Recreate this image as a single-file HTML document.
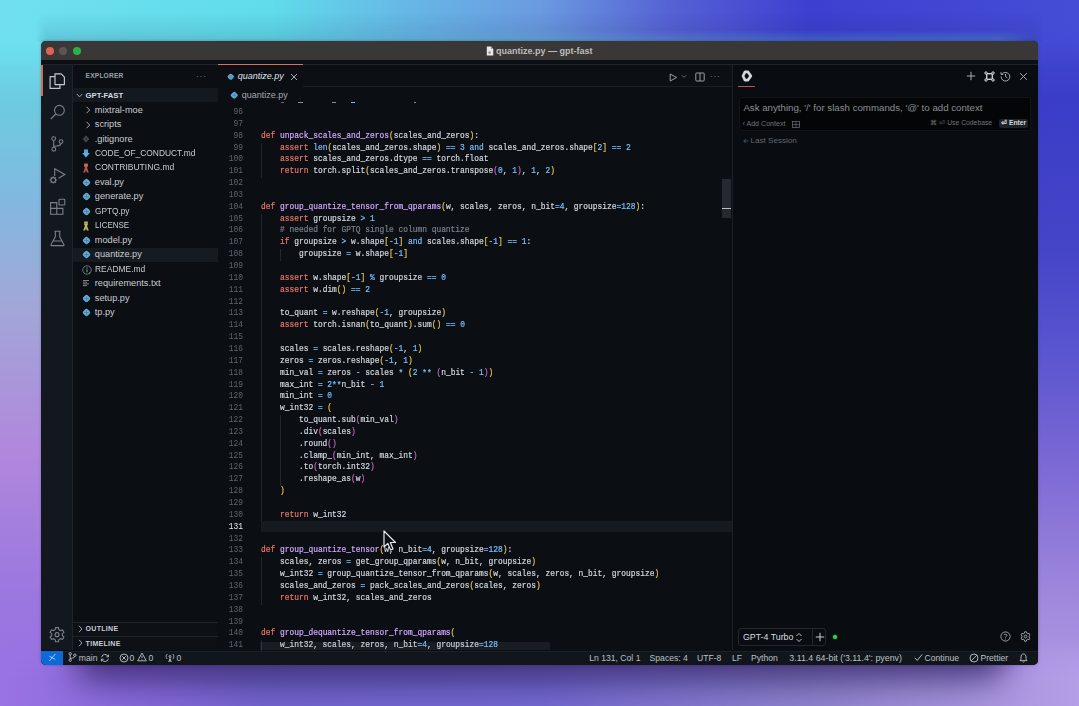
<!DOCTYPE html>
<html><head><meta charset="utf-8">
<style>
*{margin:0;padding:0;box-sizing:border-box}
html,body{width:1079px;height:706px;overflow:hidden}
body{position:relative;font-family:"Liberation Sans",sans-serif;background:#8a90e0}
i{font-style:normal}
.bgL{position:absolute;left:0;top:0;width:1079px;height:706px;
 background:linear-gradient(to bottom,#70e0f0 0px,#6ce0f0 40px,#6ccbe0 100px,#82b8e0 200px,#a0a8d8 300px,#b088dc 450px,#9a76e0 600px,#9a73e3 706px)}
.bgR{position:absolute;left:0;top:0;width:1079px;height:706px;
 background:linear-gradient(to bottom,#454dd6 0px,#3a3dc8 100px,#4545c8 250px,#5a55d0 353px,#7866d4 450px,#a088dc 600px,#b59ee8 706px);
 -webkit-mask-image:linear-gradient(to right,rgba(0,0,0,0) 0px,rgba(0,0,0,0) 1000px,rgba(0,0,0,1) 1040px)}
.bgT{position:absolute;left:0;top:0;width:1079px;height:706px;
 background:linear-gradient(to right,#70e0f0 0px,#60dcea 270px,#66b8e6 405px,#6a9ae0 540px,#5560d4 675px,#3c40d0 810px,#454dd6 1079px);
 -webkit-mask-image:linear-gradient(to bottom,rgba(0,0,0,1) 0px,rgba(0,0,0,1) 30px,rgba(0,0,0,0) 70px)}
.bgB{position:absolute;left:0;top:0;width:1079px;height:706px;
 background:linear-gradient(to right,#9a73e3 0px,#8668d8 135px,#7163cb 270px,#7267cf 540px,#8d81cb 810px,#b59ee8 1079px);
 -webkit-mask-image:linear-gradient(to bottom,rgba(0,0,0,0) 0px,rgba(0,0,0,0) 640px,rgba(0,0,0,1) 680px)}
.win{position:absolute;left:41px;top:41px;width:997px;height:624px;border-radius:5px;overflow:hidden;background:#0b0e12;
 box-shadow:0 0 3px rgba(0,0,0,0.25)}
.shadow{position:absolute;left:75px;top:600px;width:930px;height:80px;background:rgba(30,20,75,0.68);filter:blur(16px);border-radius:20px}
.abs{position:absolute}
.title{left:0;top:0;width:997px;height:19px;background:#3a3737}
.dot{position:absolute;top:5.7px;width:8.6px;height:8.6px;border-radius:50%}
.ttext{position:absolute;left:455px;top:5px;font-size:9px;font-weight:bold;color:#bdbdbd;white-space:pre}
.band{left:0;top:19px;width:997px;height:5px;background:#0c0f13;border-bottom:1px solid #20242a}
.act{left:0;top:24px;width:32px;height:585px;background:#13181e;border-right:1px solid #1f242a}
.side{left:32px;top:24px;width:145px;height:585px;background:#0b0e12}
.edit{left:177px;top:24px;width:514px;height:585px;background:#0b0e13;overflow:hidden}
.panel{left:690.5px;top:24px;width:306.5px;height:585px;background:#090c10;border-left:1px solid #1d2126}
.status{left:0;top:609.7px;width:997px;height:14.3px;background:#11161c;border-top:1px solid #1b2027}
.t{position:absolute;white-space:pre;color:#c8ccd2;line-height:1}
.ln{position:absolute;left:170px;width:32px;text-align:right;font-family:"Liberation Mono",monospace;font-size:8.9px;transform:scaleX(0.89);transform-origin:100% 0;line-height:11.856px;height:11.856px;color:#5f666e;white-space:pre}
.ln.cur{color:#e6edf3}
.cl{position:absolute;left:219.8px;-webkit-text-stroke:0.2px currentColor;font-family:"Liberation Mono",monospace;font-size:8.9px;transform:scaleX(0.89);transform-origin:0 0;line-height:11.856px;height:11.856px;color:#d3d9df;white-space:pre}
.guide{position:absolute;width:1px;background:#22272e}
.row{position:absolute;left:32px;width:145px;height:14.5px}
.row.sel{background:#161b22}
.ic{position:absolute;display:block;line-height:0}
.fn{position:absolute;top:1.5px;font-size:9.2px;line-height:10px;color:#c9cdd3;white-space:pre}
svg{display:block}
</style></head><body>
<div class="bgL"></div><div class="bgR"></div><div class="bgT"></div><div class="bgB"></div><div class="shadow"></div><div style="position:absolute;left:36px;top:12px;width:1007px;height:30px;background:linear-gradient(to bottom,rgba(10,20,60,0) 0px,rgba(10,20,60,0.07) 18px,rgba(10,20,60,0.14) 29px);-webkit-mask-image:linear-gradient(to right,transparent 0,black 10px,black 997px,transparent 1007px)"></div>
<div class="win">
  <div class="abs title">
    <div class="dot" style="left:4.7px;background:#dd6258"></div>
    <div class="dot" style="left:17.7px;background:#5a5656"></div>
    <div class="dot" style="left:31.7px;background:#2bb04a"></div>
    <div class="ttext">quantize.py — gpt-fast</div>
    <svg class="abs" style="left:444.5px;top:4.8px" width="8" height="10" viewBox="0 0 8 10"><path d="M0.8 0.6 H5 L7.3 2.9 V9.4 H0.8 Z" fill="#e8e8e8"/><path d="M5 0.6 V2.9 H7.3" fill="#9a9a9a"/><circle cx="3.6" cy="6.6" r="1.3" fill="#8a9ab0"/></svg>
  </div>
  <div class="abs band"></div>
  <div class="abs act"></div>
  <div class="abs side"></div>
  <div class="abs panel"></div>
  <div class="abs status"></div>
  <!-- code -->
  <div class="abs" style="left:177px;top:46px;width:514px;height:563px;background:#0b0e13"></div>
  <div class="guide" style="left:219.6px;top:101.5px;height:35.5px"></div><div class="guide" style="left:219.6px;top:172.6px;height:308.1px"></div><div class="guide" style="left:219.6px;top:516.2px;height:47.4px"></div><div class="guide" style="left:219.6px;top:599.2px;height:11.8px"></div><div class="guide" style="left:238.6px;top:208.1px;height:11.8px"></div><div class="guide" style="left:238.6px;top:374.0px;height:71.1px"></div>
  <div class="ln" style="top:65.95px">96</div>
<div class="ln" style="top:77.80px">97</div>
<div class="ln" style="top:89.65px">98</div>
<div class="ln" style="top:101.50px">99</div>
<div class="ln" style="top:113.35px">100</div>
<div class="ln" style="top:125.20px">101</div>
<div class="ln" style="top:137.05px">102</div>
<div class="ln" style="top:148.90px">103</div>
<div class="ln" style="top:160.75px">104</div>
<div class="ln" style="top:172.60px">105</div>
<div class="ln" style="top:184.45px">106</div>
<div class="ln" style="top:196.30px">107</div>
<div class="ln" style="top:208.15px">108</div>
<div class="ln" style="top:220.00px">109</div>
<div class="ln" style="top:231.85px">110</div>
<div class="ln" style="top:243.70px">111</div>
<div class="ln" style="top:255.55px">112</div>
<div class="ln" style="top:267.40px">113</div>
<div class="ln" style="top:279.25px">114</div>
<div class="ln" style="top:291.10px">115</div>
<div class="ln" style="top:302.95px">116</div>
<div class="ln" style="top:314.80px">117</div>
<div class="ln" style="top:326.65px">118</div>
<div class="ln" style="top:338.50px">119</div>
<div class="ln" style="top:350.35px">120</div>
<div class="ln" style="top:362.20px">121</div>
<div class="ln" style="top:374.05px">122</div>
<div class="ln" style="top:385.90px">123</div>
<div class="ln" style="top:397.75px">124</div>
<div class="ln" style="top:409.60px">125</div>
<div class="ln" style="top:421.45px">126</div>
<div class="ln" style="top:433.30px">127</div>
<div class="ln" style="top:445.15px">128</div>
<div class="ln" style="top:457.00px">129</div>
<div class="ln" style="top:468.85px">130</div>
<div class="ln cur" style="top:480.70px">131</div>
<div class="ln" style="top:492.55px">132</div>
<div class="ln" style="top:504.40px">133</div>
<div class="ln" style="top:516.25px">134</div>
<div class="ln" style="top:528.10px">135</div>
<div class="ln" style="top:539.95px">136</div>
<div class="ln" style="top:551.80px">137</div>
<div class="ln" style="top:563.65px">138</div>
<div class="ln" style="top:575.50px">139</div>
<div class="ln" style="top:587.35px">140</div>
<div class="ln" style="top:599.20px">141</div>
<div class="cl" style="top:65.95px"></div>
<div class="cl" style="top:77.80px"></div>
<div class="cl" style="top:89.65px"><i style="color:#f0766a">def</i> <i style="color:#d2a8ff">unpack_scales_and_zeros</i><i style="color:#e8c64a">(</i>scales_and_zeros<i style="color:#e8c64a">)</i>:</div>
<div class="cl" style="top:101.50px">    <i style="color:#f0766a">assert</i> <i style="color:#79c0ff">len</i><i style="color:#e8c64a">(</i>scales_and_zeros.shape<i style="color:#e8c64a">)</i> <i style="color:#79c0ff">==</i> <i style="color:#79c0ff">3</i> <i style="color:#79c0ff">and</i> scales_and_zeros.shape<i style="color:#e8c64a">[</i><i style="color:#79c0ff">2</i><i style="color:#e8c64a">]</i> <i style="color:#79c0ff">==</i> <i style="color:#79c0ff">2</i></div>
<div class="cl" style="top:113.35px">    <i style="color:#f0766a">assert</i> scales_and_zeros.dtype <i style="color:#79c0ff">==</i> torch.float</div>
<div class="cl" style="top:125.20px">    <i style="color:#f0766a">return</i> torch.split<i style="color:#e8c64a">(</i>scales_and_zeros.transpose<i style="color:#c766c4">(</i><i style="color:#79c0ff">0</i>, <i style="color:#79c0ff">1</i><i style="color:#c766c4">)</i>, <i style="color:#79c0ff">1</i>, <i style="color:#79c0ff">2</i><i style="color:#e8c64a">)</i></div>
<div class="cl" style="top:137.05px"></div>
<div class="cl" style="top:148.90px"></div>
<div class="cl" style="top:160.75px"><i style="color:#f0766a">def</i> <i style="color:#d2a8ff">group_quantize_tensor_from_qparams</i><i style="color:#e8c64a">(</i>w, scales, zeros, n_bit<i style="color:#79c0ff">=</i><i style="color:#79c0ff">4</i>, groupsize<i style="color:#79c0ff">=</i><i style="color:#79c0ff">128</i><i style="color:#e8c64a">)</i>:</div>
<div class="cl" style="top:172.60px">    <i style="color:#f0766a">assert</i> groupsize <i style="color:#79c0ff">&gt;</i> <i style="color:#79c0ff">1</i></div>
<div class="cl" style="top:184.45px">    <i style="color:#7a828b"># needed for GPTQ single column quantize</i></div>
<div class="cl" style="top:196.30px">    <i style="color:#f0766a">if</i> groupsize <i style="color:#79c0ff">&gt;</i> w.shape<i style="color:#e8c64a">[</i><i style="color:#79c0ff">-</i><i style="color:#79c0ff">1</i><i style="color:#e8c64a">]</i> <i style="color:#79c0ff">and</i> scales.shape<i style="color:#e8c64a">[</i><i style="color:#79c0ff">-</i><i style="color:#79c0ff">1</i><i style="color:#e8c64a">]</i> <i style="color:#79c0ff">==</i> <i style="color:#79c0ff">1</i>:</div>
<div class="cl" style="top:208.15px">        groupsize <i style="color:#79c0ff">=</i> w.shape<i style="color:#e8c64a">[</i><i style="color:#79c0ff">-</i><i style="color:#79c0ff">1</i><i style="color:#e8c64a">]</i></div>
<div class="cl" style="top:220.00px"></div>
<div class="cl" style="top:231.85px">    <i style="color:#f0766a">assert</i> w.shape<i style="color:#e8c64a">[</i><i style="color:#79c0ff">-</i><i style="color:#79c0ff">1</i><i style="color:#e8c64a">]</i> <i style="color:#79c0ff">%</i> groupsize <i style="color:#79c0ff">==</i> <i style="color:#79c0ff">0</i></div>
<div class="cl" style="top:243.70px">    <i style="color:#f0766a">assert</i> w.dim<i style="color:#e8c64a">(</i><i style="color:#e8c64a">)</i> <i style="color:#79c0ff">==</i> <i style="color:#79c0ff">2</i></div>
<div class="cl" style="top:255.55px"></div>
<div class="cl" style="top:267.40px">    to_quant <i style="color:#79c0ff">=</i> w.reshape<i style="color:#e8c64a">(</i><i style="color:#79c0ff">-</i><i style="color:#79c0ff">1</i>, groupsize<i style="color:#e8c64a">)</i></div>
<div class="cl" style="top:279.25px">    <i style="color:#f0766a">assert</i> torch.isnan<i style="color:#e8c64a">(</i>to_quant<i style="color:#e8c64a">)</i>.sum<i style="color:#e8c64a">(</i><i style="color:#e8c64a">)</i> <i style="color:#79c0ff">==</i> <i style="color:#79c0ff">0</i></div>
<div class="cl" style="top:291.10px"></div>
<div class="cl" style="top:302.95px">    scales <i style="color:#79c0ff">=</i> scales.reshape<i style="color:#e8c64a">(</i><i style="color:#79c0ff">-</i><i style="color:#79c0ff">1</i>, <i style="color:#79c0ff">1</i><i style="color:#e8c64a">)</i></div>
<div class="cl" style="top:314.80px">    zeros <i style="color:#79c0ff">=</i> zeros.reshape<i style="color:#e8c64a">(</i><i style="color:#79c0ff">-</i><i style="color:#79c0ff">1</i>, <i style="color:#79c0ff">1</i><i style="color:#e8c64a">)</i></div>
<div class="cl" style="top:326.65px">    min_val <i style="color:#79c0ff">=</i> zeros <i style="color:#79c0ff">-</i> scales <i style="color:#79c0ff;position:relative;top:1.6px">*</i> <i style="color:#e8c64a">(</i><i style="color:#79c0ff">2</i> <i style="color:#79c0ff;position:relative;top:1.6px">**</i> <i style="color:#c766c4">(</i>n_bit <i style="color:#79c0ff">-</i> <i style="color:#79c0ff">1</i><i style="color:#c766c4">)</i><i style="color:#e8c64a">)</i></div>
<div class="cl" style="top:338.50px">    max_int <i style="color:#79c0ff">=</i> <i style="color:#79c0ff">2</i><i style="color:#79c0ff;position:relative;top:1.6px">**</i>n_bit <i style="color:#79c0ff">-</i> <i style="color:#79c0ff">1</i></div>
<div class="cl" style="top:350.35px">    min_int <i style="color:#79c0ff">=</i> <i style="color:#79c0ff">0</i></div>
<div class="cl" style="top:362.20px">    w_int32 <i style="color:#79c0ff">=</i> <i style="color:#e8c64a">(</i></div>
<div class="cl" style="top:374.05px">        to_quant.sub<i style="color:#c766c4">(</i>min_val<i style="color:#c766c4">)</i></div>
<div class="cl" style="top:385.90px">        .div<i style="color:#c766c4">(</i>scales<i style="color:#c766c4">)</i></div>
<div class="cl" style="top:397.75px">        .round<i style="color:#c766c4">(</i><i style="color:#c766c4">)</i></div>
<div class="cl" style="top:409.60px">        .clamp_<i style="color:#c766c4">(</i>min_int, max_int<i style="color:#c766c4">)</i></div>
<div class="cl" style="top:421.45px">        .to<i style="color:#c766c4">(</i>torch.int32<i style="color:#c766c4">)</i></div>
<div class="cl" style="top:433.30px">        .reshape_as<i style="color:#c766c4">(</i>w<i style="color:#c766c4">)</i></div>
<div class="cl" style="top:445.15px">    <i style="color:#e8c64a">)</i></div>
<div class="cl" style="top:457.00px"></div>
<div class="cl" style="top:468.85px">    <i style="color:#f0766a">return</i> w_int32</div>
<div class="cl" style="top:480.70px"></div>
<div class="cl" style="top:492.55px"></div>
<div class="cl" style="top:504.40px"><i style="color:#f0766a">def</i> <i style="color:#d2a8ff">group_quantize_tensor</i><i style="color:#e8c64a">(</i>w, n_bit<i style="color:#79c0ff">=</i><i style="color:#79c0ff">4</i>, groupsize<i style="color:#79c0ff">=</i><i style="color:#79c0ff">128</i><i style="color:#e8c64a">)</i>:</div>
<div class="cl" style="top:516.25px">    scales, zeros <i style="color:#79c0ff">=</i> get_group_qparams<i style="color:#e8c64a">(</i>w, n_bit, groupsize<i style="color:#e8c64a">)</i></div>
<div class="cl" style="top:528.10px">    w_int32 <i style="color:#79c0ff">=</i> group_quantize_tensor_from_qparams<i style="color:#e8c64a">(</i>w, scales, zeros, n_bit, groupsize<i style="color:#e8c64a">)</i></div>
<div class="cl" style="top:539.95px">    scales_and_zeros <i style="color:#79c0ff">=</i> pack_scales_and_zeros<i style="color:#e8c64a">(</i>scales, zeros<i style="color:#e8c64a">)</i></div>
<div class="cl" style="top:551.80px">    <i style="color:#f0766a">return</i> w_int32, scales_and_zeros</div>
<div class="cl" style="top:563.65px"></div>
<div class="cl" style="top:575.50px"></div>
<div class="cl" style="top:587.35px"><i style="color:#f0766a">def</i> <i style="color:#d2a8ff">group_dequantize_tensor_from_qparams</i><i style="color:#e8c64a">(</i></div>
<div class="cl" style="top:599.20px">    w_int32, scales, zeros, n_bit<i style="color:#79c0ff">=</i><i style="color:#79c0ff">4</i>, groupsize<i style="color:#79c0ff">=</i><i style="color:#79c0ff">128</i></div>
  <!-- sidebar -->
  <div class="row" style="top:62.05px"><span class="ic" style="left:11.0px;top:3.2px"><svg width="8" height="8" viewBox="0 0 8 8"><path d="M2.5 0.8 L5.7 4 L2.5 7.2" fill="none" stroke="#b8bcc2" stroke-width="0.9"/></svg></span><span class="fn" style="left:21.8px">mixtral-moe</span></div>
<div class="row" style="top:76.53px"><span class="ic" style="left:11.0px;top:3.2px"><svg width="8" height="8" viewBox="0 0 8 8"><path d="M2.5 0.8 L5.7 4 L2.5 7.2" fill="none" stroke="#b8bcc2" stroke-width="0.9"/></svg></span><span class="fn" style="left:21.8px">scripts</span></div>
<div class="row" style="top:91.01px"><span class="ic" style="left:9.0px;top:2.5px"><svg width="8" height="8" viewBox="0 0 8 8"><path d="M4 0.6 L7.4 4 L4 7.4 L0.6 4Z" fill="#44484e"/><circle cx="4" cy="4" r="1" fill="#2a2d31"/></svg></span><span class="fn" style="left:21.8px">.gitignore</span></div>
<div class="row" style="top:105.49px"><span class="ic" style="left:9.0px;top:2.5px"><svg width="8" height="9" viewBox="0 0 8 9"><path d="M2 0.5 H6 V4 H7.8 L4 8.6 L0.2 4 H2Z" fill="#5fb0e0"/><path d="M3 0.5 V3.5 M5 0.5 V3.5" stroke="#3d7fb0" stroke-width="0.6"/></svg></span><span class="fn" style="left:21.8px;transform:scaleX(0.914);transform-origin:0 0">CODE_OF_CONDUCT.md</span></div>
<div class="row" style="top:119.97px"><span class="ic" style="left:9.0px;top:2.5px"><svg width="8" height="10" viewBox="0 0 8 10"><path d="M2 0.5 H6 V3.5 L5 4.5 L6.8 9.5 H4.8 L4 6.8 L3.2 9.5 H1.2 L3 4.5 L2 3.5Z" fill="#b9554a"/><circle cx="4" cy="2.3" r="0.9" fill="#e08070"/></svg></span><span class="fn" style="left:21.8px;transform:scaleX(0.93);transform-origin:0 0">CONTRIBUTING.md</span></div>
<div class="row" style="top:134.45px"><span class="ic" style="left:9.0px;top:2.5px"><svg width="9" height="9" viewBox="0 0 9 9"><rect x="1.35" y="1.35" width="6.3" height="6.3" rx="2" transform="rotate(45 4.5 4.5)" fill="#62a9da"/><path d="M2.5 4.5 H6.5 M4.5 2.5 V6.5" stroke="#3d78b0" stroke-width="0.7"/><circle cx="6.2" cy="5.8" r="0.8" fill="#40c060"/></svg></span><span class="fn" style="left:21.8px">eval.py</span></div>
<div class="row" style="top:148.93px"><span class="ic" style="left:9.0px;top:2.5px"><svg width="9" height="9" viewBox="0 0 9 9"><rect x="1.35" y="1.35" width="6.3" height="6.3" rx="2" transform="rotate(45 4.5 4.5)" fill="#62a9da"/><path d="M2.5 4.5 H6.5 M4.5 2.5 V6.5" stroke="#3d78b0" stroke-width="0.7"/><circle cx="6.2" cy="5.8" r="0.8" fill="#40c060"/></svg></span><span class="fn" style="left:21.8px">generate.py</span></div>
<div class="row" style="top:163.41px"><span class="ic" style="left:9.0px;top:2.5px"><svg width="9" height="9" viewBox="0 0 9 9"><rect x="1.35" y="1.35" width="6.3" height="6.3" rx="2" transform="rotate(45 4.5 4.5)" fill="#62a9da"/><path d="M2.5 4.5 H6.5 M4.5 2.5 V6.5" stroke="#3d78b0" stroke-width="0.7"/><circle cx="6.2" cy="5.8" r="0.8" fill="#40c060"/></svg></span><span class="fn" style="left:21.8px;transform:scaleX(0.9);transform-origin:0 0">GPTQ.py</span></div>
<div class="row" style="top:177.89px"><span class="ic" style="left:9.0px;top:2.5px"><svg width="8" height="10" viewBox="0 0 8 10"><path d="M2.2 0.5 H5.8 V4 L5 4.8 L6.8 9.5 H4.8 L4 7 L3.2 9.5 H1.2 L3 4.8 L2.2 4Z" fill="#c7b860"/><circle cx="4" cy="2.3" r="0.9" fill="#9a8a40"/></svg></span><span class="fn" style="left:21.8px;transform:scaleX(0.87);transform-origin:0 0">LICENSE</span></div>
<div class="row" style="top:192.37px"><span class="ic" style="left:9.0px;top:2.5px"><svg width="9" height="9" viewBox="0 0 9 9"><rect x="1.35" y="1.35" width="6.3" height="6.3" rx="2" transform="rotate(45 4.5 4.5)" fill="#62a9da"/><path d="M2.5 4.5 H6.5 M4.5 2.5 V6.5" stroke="#3d78b0" stroke-width="0.7"/><circle cx="6.2" cy="5.8" r="0.8" fill="#40c060"/></svg></span><span class="fn" style="left:21.8px">model.py</span></div>
<div class="row sel" style="top:206.85px"><span class="ic" style="left:9.0px;top:2.5px"><svg width="9" height="9" viewBox="0 0 9 9"><rect x="1.35" y="1.35" width="6.3" height="6.3" rx="2" transform="rotate(45 4.5 4.5)" fill="#62a9da"/><path d="M2.5 4.5 H6.5 M4.5 2.5 V6.5" stroke="#3d78b0" stroke-width="0.7"/><circle cx="6.2" cy="5.8" r="0.8" fill="#40c060"/></svg></span><span class="fn" style="left:21.8px">quantize.py</span></div>
<div class="row" style="top:221.33px"><span class="ic" style="left:9.0px;top:2.5px"><svg width="10" height="10" viewBox="0 0 10 10"><circle cx="5" cy="5" r="4.2" fill="none" stroke="#6f7f8f" stroke-width="0.9"/><path d="M5 4.3 V7.3" stroke="#8a9aa8" stroke-width="1"/><circle cx="5" cy="2.9" r="0.6" fill="#8a9aa8"/><circle cx="7.5" cy="8.3" r="0.8" fill="#3cc060"/></svg></span><span class="fn" style="left:21.8px;transform:scaleX(0.92);transform-origin:0 0">README.md</span></div>
<div class="row" style="top:235.81px"><span class="ic" style="left:9.0px;top:2.5px"><svg width="8" height="8" viewBox="0 0 8 8"><path d="M1 1.5 H7 M1 3.2 H5 M1 4.9 H7 M1 6.6 H5" stroke="#8d9196" stroke-width="0.9"/></svg></span><span class="fn" style="left:21.8px">requirements.txt</span></div>
<div class="row" style="top:250.29px"><span class="ic" style="left:9.0px;top:2.5px"><svg width="9" height="9" viewBox="0 0 9 9"><rect x="1.35" y="1.35" width="6.3" height="6.3" rx="2" transform="rotate(45 4.5 4.5)" fill="#62a9da"/><path d="M2.5 4.5 H6.5 M4.5 2.5 V6.5" stroke="#3d78b0" stroke-width="0.7"/><circle cx="6.2" cy="5.8" r="0.8" fill="#40c060"/></svg></span><span class="fn" style="left:21.8px">setup.py</span></div>
<div class="row" style="top:264.77px"><span class="ic" style="left:9.0px;top:2.5px"><svg width="9" height="9" viewBox="0 0 9 9"><rect x="1.35" y="1.35" width="6.3" height="6.3" rx="2" transform="rotate(45 4.5 4.5)" fill="#62a9da"/><path d="M2.5 4.5 H6.5 M4.5 2.5 V6.5" stroke="#3d78b0" stroke-width="0.7"/><circle cx="6.2" cy="5.8" r="0.8" fill="#40c060"/></svg></span><span class="fn" style="left:21.8px">tp.py</span></div>

  <!-- activity bar -->
  <div class="abs" style="left:0;top:24px;width:1.5px;height:31px;background:#d2704c"></div>
  <svg class="abs" style="left:7.5px;top:31.5px" width="17" height="17" viewBox="0 0 17 17" fill="none" stroke="#c3c7cc" stroke-width="1.2" stroke-linejoin="round">
    <path d="M6 0.9 H12.2 L15.4 4.1 V11.6 H6 Z"/>
    <path d="M6 3.6 H1.1 V15.4 H10.9 V11.6"/>
  </svg>
  <svg class="abs" style="left:7.5px;top:62.5px" width="17" height="17" viewBox="0 0 17 17" fill="none" stroke="#7c8188" stroke-width="1.1">
    <circle cx="10.4" cy="6.3" r="4.9"/><path d="M6.8 10 L1.8 15"/>
  </svg>
  <svg class="abs" style="left:7.5px;top:93.5px" width="17" height="17" viewBox="0 0 17 17" fill="none" stroke="#7c8188" stroke-width="1.1">
    <circle cx="4.7" cy="3.6" r="1.9"/><circle cx="12" cy="6.6" r="1.9"/><circle cx="4.8" cy="14.2" r="1.9"/>
    <path d="M4.7 5.5 V12.3 M12 8.5 C12 10.8 9 11 4.8 11.3"/>
  </svg>
  <svg class="abs" style="left:7.5px;top:125.5px" width="17" height="17" viewBox="0 0 17 17" fill="none" stroke="#7c8188" stroke-width="1.1">
    <path d="M5.7 9 V1.8 L15.8 7.6 L9.6 11.2"/>
    <circle cx="4.3" cy="13" r="2.4"/><path d="M4.3 9.3 V10.3 M4.3 15.6 V16.6 M0.6 13 H1.6 M7 13 H8 M1.7 10.4 L2.4 11.1 M6.2 14.9 L6.9 15.6 M1.7 15.6 L2.4 14.9 M6.2 11.1 L6.9 10.4"/>
  </svg>
  <svg class="abs" style="left:7.5px;top:156.5px" width="17" height="17" viewBox="0 0 17 17" fill="none" stroke="#7c8188" stroke-width="1.1">
    <path d="M1.6 4.6 H7.8 V16.3 H1.6 Z M1.6 10.4 H13.9 V16.3 H7.8"/>
    <rect x="10" y="1.2" width="5.8" height="5.8" rx="0.8"/>
  </svg>
  <svg class="abs" style="left:7.5px;top:189px" width="17" height="17" viewBox="0 0 17 17" fill="none" stroke="#7c8188" stroke-width="1.1">
    <path d="M5.5 1.2 H11.5 M6.3 1.2 V6.8 L2 14.6 C1.8 15.2 2.1 15.6 2.7 15.6 H14.3 C14.9 15.6 15.2 15.2 15 14.6 L10.7 6.8 V1.2 M4 11 H13"/>
  </svg>
  <svg class="abs" style="left:7px;top:584.5px" width="18" height="18" viewBox="0 0 18 18" fill="none" stroke="#7c8188" stroke-width="1.1">
    <path d="M7.6 1.6 H10.4 L10.9 3.7 L12.5 4.6 L14.5 3.9 L15.9 6.3 L14.3 7.7 V9.5 L15.9 11 L14.5 13.4 L12.5 12.7 L10.9 13.6 L10.4 15.7 H7.6 L7.1 13.6 L5.5 12.7 L3.5 13.4 L2.1 11 L3.7 9.5 V7.7 L2.1 6.3 L3.5 3.9 L5.5 4.6 L7.1 3.7 Z"/>
    <circle cx="9" cy="8.65" r="2"/>
  </svg>
  <!-- sidebar header -->
  <div class="t" style="left:44.6px;top:32.3px;font-size:6.6px;font-weight:bold;letter-spacing:0.2px;color:#9ca2a9">EXPLORER</div>
  <div class="t" style="left:155px;top:31px;font-size:9px;color:#6d737a;letter-spacing:0.5px">···</div>
  <div class="abs" style="left:32px;top:46.5px;width:145px;height:14.2px;background:#141920"></div>
  <svg class="abs" style="left:35px;top:51px" width="7" height="7" viewBox="0 0 7 7"><path d="M0.8 2 L3.5 4.9 L6.2 2" fill="none" stroke="#aeb3b9" stroke-width="0.9"/></svg>
  <div class="t" style="left:44.6px;top:50.6px;font-size:7.7px;font-weight:bold;color:#d6dbe0">GPT-FAST</div>
  <!-- outline / timeline -->
  <div class="abs" style="left:32px;top:580.5px;width:145px;height:14px;border-top:1px solid #1f242a;background:#0d1015"></div>
  <div class="abs" style="left:32px;top:594.5px;width:145px;height:14.5px;border-top:1px solid #1f242a;background:#0d1015"></div>
  <svg class="abs" style="left:36px;top:583.5px" width="7" height="8" viewBox="0 0 7 8"><path d="M2 0.8 L4.9 4 L2 7.2" fill="none" stroke="#aeb3b9" stroke-width="0.9"/></svg>
  <svg class="abs" style="left:36px;top:597.8px" width="7" height="8" viewBox="0 0 7 8"><path d="M2 0.8 L4.9 4 L2 7.2" fill="none" stroke="#aeb3b9" stroke-width="0.9"/></svg>
  <div class="t" style="left:44.6px;top:584.3px;font-size:7px;font-weight:bold;letter-spacing:0.3px;color:#c9ced4">OUTLINE</div>
  <div class="t" style="left:44.6px;top:598.6px;font-size:7px;font-weight:bold;letter-spacing:0.3px;color:#c9ced4">TIMELINE</div>
  <!-- tab bar -->
  <div class="abs" style="left:177px;top:24px;width:514px;height:22px;background:#0c0f13;border-bottom:1px solid #1b1f25"></div>
  <div class="abs" style="left:177px;top:23px;width:85px;height:23px;background:#0b0e13;border-top:1.3px solid #d9705c"></div>
  <svg class="abs" style="left:185.5px;top:31.5px" width="7.5" height="7.5" viewBox="0 0 9 9"><rect x="1.35" y="1.35" width="6.3" height="6.3" rx="2" transform="rotate(45 4.5 4.5)" fill="#62a9da"/><path d="M2.5 4.5 H6.5 M4.5 2.5 V6.5" stroke="#3d78b0" stroke-width="0.7"/><circle cx="6.2" cy="5.8" r="0.8" fill="#40c060"/></svg>
  <div class="t" style="left:196.7px;top:31.3px;font-size:9px;font-style:italic;color:#dfe3e8">quantize.py</div>
  <svg class="abs" style="left:248.5px;top:31.8px" width="8" height="8" viewBox="0 0 8 8"><path d="M1 1 L7 7 M7 1 L1 7" stroke="#b9bec4" stroke-width="0.9"/></svg>
  <!-- editor actions -->
  <svg class="abs" style="left:627.5px;top:31.5px" width="9" height="9" viewBox="0 0 9 9"><path d="M1.2 1 L7.6 4.5 L1.2 8 Z" fill="none" stroke="#a9aeb4" stroke-width="0.9" stroke-linejoin="round"/></svg>
  <svg class="abs" style="left:640px;top:33px" width="6" height="5" viewBox="0 0 6 5"><path d="M0.8 1.2 L3 3.4 L5.2 1.2" fill="none" stroke="#7d8288" stroke-width="0.8"/></svg>
  <svg class="abs" style="left:653.5px;top:30.5px" width="10" height="10" viewBox="0 0 10 10"><rect x="0.8" y="1" width="8.4" height="8" rx="0.8" fill="none" stroke="#a9aeb4" stroke-width="0.9"/><path d="M5 1 V9" stroke="#a9aeb4" stroke-width="0.9"/></svg>
  <div class="t" style="left:669px;top:31px;font-size:9px;color:#6d737a;letter-spacing:0.5px">···</div>
  <!-- breadcrumb -->
  <svg class="abs" style="left:188.5px;top:49.8px" width="8.5" height="8.5" viewBox="0 0 9 9"><rect x="1.35" y="1.35" width="6.3" height="6.3" rx="2" transform="rotate(45 4.5 4.5)" fill="#62a9da"/><path d="M2.5 4.5 H6.5 M4.5 2.5 V6.5" stroke="#3d78b0" stroke-width="0.7"/><circle cx="6.2" cy="5.8" r="0.8" fill="#40c060"/></svg>
  <div class="t" style="left:200.8px;top:50px;font-size:9px;color:#a3a9b0">quantize.py</div>
  <div class="abs" style="left:240px;top:60.5px;width:3px;height:1px;background:#6a7078"></div>
  <div class="abs" style="left:257px;top:60.5px;width:5px;height:1px;background:#8a9098"></div>
  <div class="abs" style="left:291px;top:60.5px;width:4px;height:1px;background:#8a9098"></div>
  <div class="abs" style="left:310px;top:60.5px;width:4px;height:1px;background:#79c0ff"></div>
  <div class="abs" style="left:372.5px;top:60.5px;width:2px;height:1px;background:#8a9098"></div>
  <!-- scrollbars -->
  <div class="abs" style="left:681px;top:138.3px;width:9.2px;height:38.5px;background:#252a31"></div>
  <div class="abs" style="left:681px;top:167.1px;width:9.2px;height:1.1px;background:#b9bec3"></div>
  <div class="abs" style="left:219px;top:601px;width:289.5px;height:8px;background:rgba(120,130,145,0.13)"></div>
  <!-- current line -->
  <div class="abs" style="left:219.5px;top:480.4px;width:471px;height:10.4px;background:#161b22"></div>
  <!-- mouse cursor -->
  <svg class="abs" style="left:342px;top:489px" width="14" height="22" viewBox="0 0 14 22">
    <path d="M1 1 V17 L4.8 13.4 L7.6 20 L10 19 L7.3 12.5 L12.5 12.5 Z" fill="#0b0e13" stroke="#e8ecef" stroke-width="1.2" stroke-linejoin="round"/>
  </svg>
  <!-- right panel -->
  <svg class="abs" style="left:699.5px;top:28.9px" width="12" height="12" viewBox="0 0 12 12"><path d="M4 1.9 H7 L9.8 6 L7 10.1 H4 L2 6 Z" fill="none" stroke="#d3d7db" stroke-width="2.7" stroke-linejoin="round"/></svg>
  <div class="abs" style="left:697.2px;top:45.3px;width:16.7px;height:1px;background:#b45a45"></div>
  
  <svg class="abs" style="left:925px;top:30px" width="10" height="10" viewBox="0 0 10 10"><path d="M5 0.8 V9.2 M0.8 5 H9.2" stroke="#a9aeb4" stroke-width="1"/></svg>
  <svg class="abs" style="left:942.5px;top:29.5px" width="11" height="11" viewBox="0 0 11 11"><path d="M1 1 H3 V2.5 H8 V1 H10 V3 H8.5 V8 H10 V10 H8 V8.5 H3 V10 H1 V8 H2.5 V3 H1 Z" fill="none" stroke="#c9ced3" stroke-width="1"/><rect x="3" y="3" width="5" height="5" fill="none" stroke="#c9ced3" stroke-width="0.8"/></svg>
  <svg class="abs" style="left:959px;top:29.5px" width="11" height="11" viewBox="0 0 11 11"><path d="M2.2 3 A4.3 4.3 0 1 1 1.2 5.5" fill="none" stroke="#a9aeb4" stroke-width="1"/><path d="M1 1.2 V3.4 H3.2" fill="none" stroke="#a9aeb4" stroke-width="1"/><path d="M5.5 3 V5.5 L7.3 6.8" fill="none" stroke="#a9aeb4" stroke-width="1"/></svg>
  <svg class="abs" style="left:977.5px;top:30.5px" width="9" height="9" viewBox="0 0 9 9"><path d="M1.2 1.2 L7.8 7.8 M7.8 1.2 L1.2 7.8" stroke="#a9aeb4" stroke-width="1"/></svg>
  <!-- input box -->
  <div class="abs" style="left:698.4px;top:55.7px;width:291.5px;height:34px;background:#040507;border-radius:3px;border:1px solid #111418"></div>
  <div class="t" style="left:702.4px;top:61.5px;font-size:9.7px;color:#8a8f95">Ask anything, '/' for slash commands, '@' to add context</div>
  <div class="t" style="left:701.5px;top:79.6px;font-size:7.1px;color:#6f747a">‹ Add Context</div>
  <svg class="abs" style="left:751px;top:79.5px" width="8" height="7" viewBox="0 0 8 7"><rect x="0.5" y="0.5" width="7" height="6" fill="none" stroke="#6f747a" stroke-width="0.7"/><path d="M0.5 3.5 H7.5 M4 0.5 V6.5" stroke="#6f747a" stroke-width="0.6"/></svg>
  <div class="t" style="left:889.4px;top:79.2px;font-size:6.8px;color:#6f747a">⌘ ⏎ Use Codebase</div>
  <div class="abs" style="left:957.7px;top:78px;width:29px;height:8.5px;background:#1e2227;border-radius:2px"></div>
  <div class="t" style="left:960px;top:79.4px;font-size:6.8px;font-weight:bold;color:#d4d8dc">⏎ Enter</div>
  <svg class="abs" style="left:701.5px;top:96.8px" width="6" height="6" viewBox="0 0 6 6"><path d="M5.5 3 H0.8 M2.8 1 L0.8 3 L2.8 5" fill="none" stroke="#62676d" stroke-width="0.7"/></svg><div class="t" style="left:709.5px;top:95.8px;font-size:8.1px;color:#62676d">Last Session</div>
  <!-- model selector -->
  <div class="abs" style="left:696.8px;top:587.3px;width:88.6px;height:18px;border:1px solid #23272d;border-radius:3px"></div>
  <div class="abs" style="left:771px;top:587.3px;width:1px;height:18px;background:#23272d"></div>
  <div class="t" style="left:702px;top:591.6px;font-size:8.8px;color:#d9dde1">GPT-4 Turbo</div>
  <svg class="abs" style="left:753.7px;top:590.5px" width="8" height="11" viewBox="0 0 8 11"><path d="M1.5 4 L4 1.5 L6.5 4 M1.5 7 L4 9.5 L6.5 7" fill="none" stroke="#c9ced3" stroke-width="0.9"/></svg>
  <svg class="abs" style="left:773.5px;top:591px" width="10" height="10" viewBox="0 0 10 10"><path d="M5 0.8 V9.2 M0.8 5 H9.2" stroke="#c9ced3" stroke-width="1"/></svg>
  <div class="abs" style="left:791.8px;top:593.5px;width:4.5px;height:4.5px;border-radius:50%;background:#33d04a;box-shadow:0 0 2px #33d04a"></div>
  <svg class="abs" style="left:958.5px;top:589.5px" width="11" height="11" viewBox="0 0 11 11"><circle cx="5.5" cy="5.5" r="4.6" fill="none" stroke="#a9aeb4" stroke-width="0.9"/><path d="M4 4.3 C4 2.8 7 2.8 7 4.3 C7 5.3 5.5 5.3 5.5 6.6" fill="none" stroke="#a9aeb4" stroke-width="0.9"/><circle cx="5.5" cy="8.1" r="0.5" fill="#a9aeb4"/></svg>
  <svg class="abs" style="left:978.5px;top:589.5px" width="11" height="11" viewBox="0 0 11 11"><path d="M4.6 0.8 H6.4 L6.7 2.2 L7.8 2.8 L9.1 2.3 L10 3.9 L9 4.8 V6.2 L10 7.1 L9.1 8.7 L7.8 8.2 L6.7 8.8 L6.4 10.2 H4.6 L4.3 8.8 L3.2 8.2 L1.9 8.7 L1 7.1 L2 6.2 V4.8 L1 3.9 L1.9 2.3 L3.2 2.8 L4.3 2.2 Z" fill="none" stroke="#a9aeb4" stroke-width="0.9"/><circle cx="5.5" cy="5.5" r="1.4" fill="none" stroke="#a9aeb4" stroke-width="0.9"/></svg>
  <!-- status bar -->
  <div class="abs" style="left:0;top:609.7px;width:22px;height:14.3px;background:#0b6ad8"></div>
  <svg class="abs" style="left:6.5px;top:611.5px" width="9" height="9" viewBox="0 0 9 9"><path d="M1.3 8 L7.3 1 M1.3 3.2 L7.3 6.4" fill="none" stroke="#bfe6ff" stroke-width="0.8"/></svg>
  <svg class="abs" style="left:26.5px;top:611px" width="9" height="10" viewBox="0 0 9 10"><circle cx="2.2" cy="1.8" r="1.2" fill="none" stroke="#c9ced3" stroke-width="0.8"/><circle cx="6.8" cy="3.2" r="1.2" fill="none" stroke="#c9ced3" stroke-width="0.8"/><circle cx="2.2" cy="8.2" r="1.2" fill="none" stroke="#c9ced3" stroke-width="0.8"/><path d="M2.2 3 V7 M6.8 4.4 C6.8 6 4 6 2.2 6.6" fill="none" stroke="#c9ced3" stroke-width="0.8"/></svg>
  <div class="t" style="left:37.8px;top:612.8px;font-size:8.6px;color:#bcc0c5">main</div>
  <svg class="abs" style="left:59px;top:611.5px" width="10" height="10" viewBox="0 0 10 10"><path d="M1.6 4.2 A3.5 3.5 0 0 1 8.2 3.5 M8.4 5.8 A3.5 3.5 0 0 1 1.8 6.5" fill="none" stroke="#c9ced3" stroke-width="0.85"/><path d="M8.6 1.6 V3.8 H6.4 M1.4 8.4 V6.2 H3.6" fill="none" stroke="#c9ced3" stroke-width="0.85"/></svg>
  <svg class="abs" style="left:77.5px;top:611.5px" width="10" height="10" viewBox="0 0 10 10"><circle cx="5" cy="5" r="4" fill="none" stroke="#c9ced3" stroke-width="0.85"/><path d="M3.2 3.2 L6.8 6.8 M6.8 3.2 L3.2 6.8" stroke="#c9ced3" stroke-width="0.85"/></svg>
  <div class="t" style="left:88.5px;top:612.8px;font-size:8.6px;color:#bcc0c5">0</div>
  <svg class="abs" style="left:96px;top:611.3px" width="10" height="10" viewBox="0 0 10 10"><path d="M5 1 L9.3 8.8 H0.7 Z" fill="none" stroke="#c9ced3" stroke-width="0.85" stroke-linejoin="round"/><path d="M5 3.8 V6.2" stroke="#c9ced3" stroke-width="0.8"/><circle cx="5" cy="7.4" r="0.45" fill="#c9ced3"/></svg>
  <div class="t" style="left:107.5px;top:612.8px;font-size:8.6px;color:#bcc0c5">0</div>
  <svg class="abs" style="left:124px;top:611.5px" width="10" height="10" viewBox="0 0 10 10"><circle cx="5" cy="3.5" r="1" fill="none" stroke="#c9ced3" stroke-width="0.8"/><path d="M5 4.5 V9 M2.2 1 C0.8 2.5 0.8 4.5 2.2 6 M7.8 1 C9.2 2.5 9.2 4.5 7.8 6 M3.6 9 L5 6 L6.4 9" fill="none" stroke="#c9ced3" stroke-width="0.8"/></svg>
  <div class="t" style="left:135.5px;top:612.8px;font-size:8.6px;color:#bcc0c5">0</div>
  <div class="t" style="left:548.3px;top:612.8px;font-size:8.6px;color:#bcc0c5">Ln 131, Col 1</div>
  <div class="t" style="left:608.6px;top:612.8px;font-size:8.6px;color:#bcc0c5">Spaces: 4</div>
  <div class="t" style="left:656px;top:612.8px;font-size:8.6px;color:#bcc0c5">UTF-8</div>
  <div class="t" style="left:691px;top:612.8px;font-size:8.6px;color:#bcc0c5">LF</div>
  <div class="t" style="left:710px;top:612.8px;font-size:8.6px;color:#bcc0c5">Python</div>
  <div class="t" style="left:748.3px;top:612.8px;font-size:8.85px;color:#bcc0c5">3.11.4 64-bit ('3.11.4': pyenv)</div>
  <svg class="abs" style="left:873px;top:612px" width="9" height="9" viewBox="0 0 9 9"><path d="M0.8 4.8 L3.2 7.4 L8.2 1.4" fill="none" stroke="#c9ced3" stroke-width="0.9"/></svg>
  <div class="t" style="left:883.6px;top:612.8px;font-size:8.6px;color:#bcc0c5">Continue</div>
  <svg class="abs" style="left:927.5px;top:611.5px" width="10" height="10" viewBox="0 0 10 10"><circle cx="5" cy="5" r="4" fill="none" stroke="#c9ced3" stroke-width="0.85"/><path d="M2.2 7.8 L7.8 2.2" stroke="#c9ced3" stroke-width="0.85"/></svg>
  <div class="t" style="left:939.5px;top:612.8px;font-size:8.6px;color:#bcc0c5">Prettier</div>
  <svg class="abs" style="left:977.5px;top:611.5px" width="9" height="10" viewBox="0 0 9 10"><path d="M4.5 1 C2.5 1 2 2.6 2 4 V6.3 L1 7.6 H8 L7 6.3 V4 C7 2.6 6.5 1 4.5 1 Z M3.5 8.6 C3.8 9.3 5.2 9.3 5.5 8.6" fill="none" stroke="#c9ced3" stroke-width="0.85"/></svg>

</div>
</body></html>
